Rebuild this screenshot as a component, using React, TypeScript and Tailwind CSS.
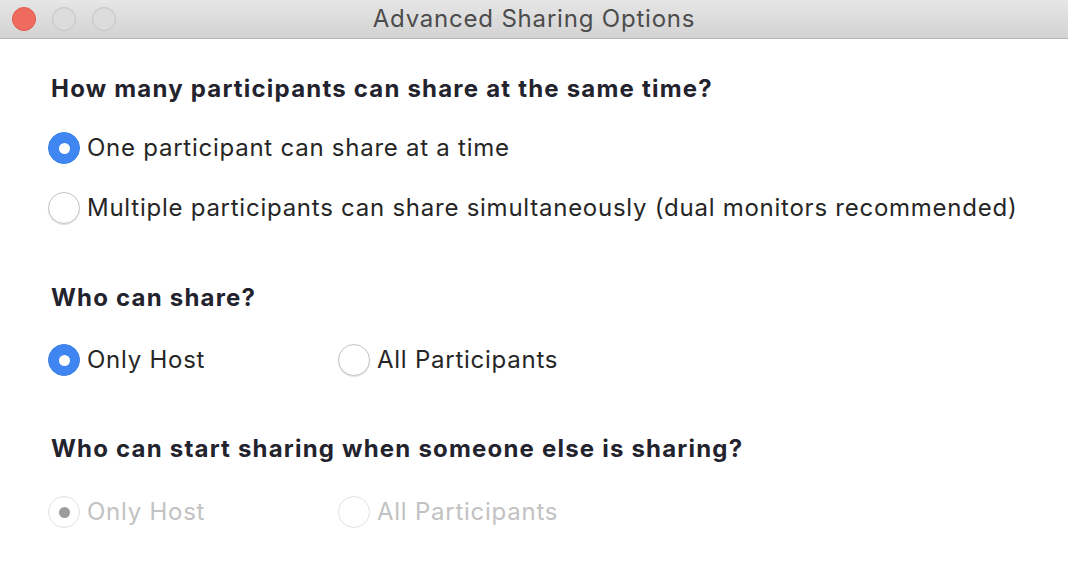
import React, { useState } from 'react';

const FONT = { fontFamily: 'Inter, "Liberation Sans", sans-serif' };

const TrafficLights = () => (
  <div className="flex items-center gap-[16px] pl-[12px]">
    <span className="w-[24px] h-[24px] rounded-full bg-[#f06b5f] border border-[#e0564b]" />
    <span className="w-[24px] h-[24px] rounded-full bg-[#dcdcdc] border border-[#c4c4c4]" />
    <span className="w-[24px] h-[24px] rounded-full bg-[#dcdcdc] border border-[#c4c4c4]" />
  </div>
);

const Radio = ({ checked, disabled, label, onClick }: { checked: boolean; disabled?: boolean; label: string; onClick?: () => void }) => {
  let circle = 'bg-white border border-[#c4c4c4] shadow-[0_1px_1px_rgba(0,0,0,0.12)]';
  let dot = null;
  if (checked && !disabled) {
    circle = 'bg-[#3f86f2] border border-[#3a7fe8]';
    dot = <span className="w-[11px] h-[11px] rounded-full bg-white" />;
  } else if (checked && disabled) {
    circle = 'bg-white border border-[#e2e2e2]';
    dot = <span className="w-[11px] h-[11px] rounded-full bg-[#9b9b9b]" />;
  } else if (disabled) {
    circle = 'bg-white border border-[#e2e2e2]';
  }
  return (
    <button onClick={onClick} disabled={disabled} className="flex items-center gap-[7px] text-left">
      <span className={`w-[32px] h-[32px] rounded-full flex items-center justify-center ${circle}`}>{dot}</span>
      <span className={`text-[24px] leading-none tracking-[0.75px] ${disabled ? 'text-[#c2c2c2]' : 'text-[#262626]'}`}>{label}</span>
    </button>
  );
};

export default function App() {
  const [share, setShare] = useState(0);
  const [who, setWho] = useState(0);
  return (
    <div className="w-[1068px] h-[578px] bg-white overflow-hidden" style={FONT}>
      <div className="relative h-[39px] bg-gradient-to-b from-[#e6e6e6] to-[#d3d3d3] border-b border-[#b5b5b5] flex items-center">
        <TrafficLights />
        <div className="absolute inset-0 flex items-center justify-center text-[24px] tracking-[0.8px] text-[#4c4c4c]">Advanced Sharing Options</div>
      </div>
      <div className="pl-[48px] pt-[38px]">
        <h2 className="pl-[3px] text-[24px] font-bold tracking-[1.2px] text-[#23232e] leading-none">How many participants can share at the same time?</h2>
        <div className="flex flex-col gap-[28px] mt-[31px]">
          <Radio checked={share === 0} label="One participant can share at a time" onClick={() => setShare(0)} />
          <Radio checked={share === 1} label="Multiple participants can share simultaneously (dual monitors recommended)" onClick={() => setShare(1)} />
        </div>
        <h2 className="pl-[3px] mt-[62px] text-[24px] font-bold tracking-[1.2px] text-[#23232e] leading-none">Who can share?</h2>
        <div className="flex mt-[34px]">
          <div className="w-[290px]"><Radio checked={who === 0} label="Only Host" onClick={() => setWho(0)} /></div>
          <Radio checked={who === 1} label="All Participants" onClick={() => setWho(1)} />
        </div>
        <h2 className="pl-[3px] mt-[61px] text-[24px] font-bold tracking-[1.2px] text-[#23232e] leading-none">Who can start sharing when someone else is sharing?</h2>
        <div className="flex mt-[35px]">
          <div className="w-[290px]"><Radio checked disabled label="Only Host" /></div>
          <Radio checked={false} disabled label="All Participants" />
        </div>
      </div>
    </div>
  );
}
